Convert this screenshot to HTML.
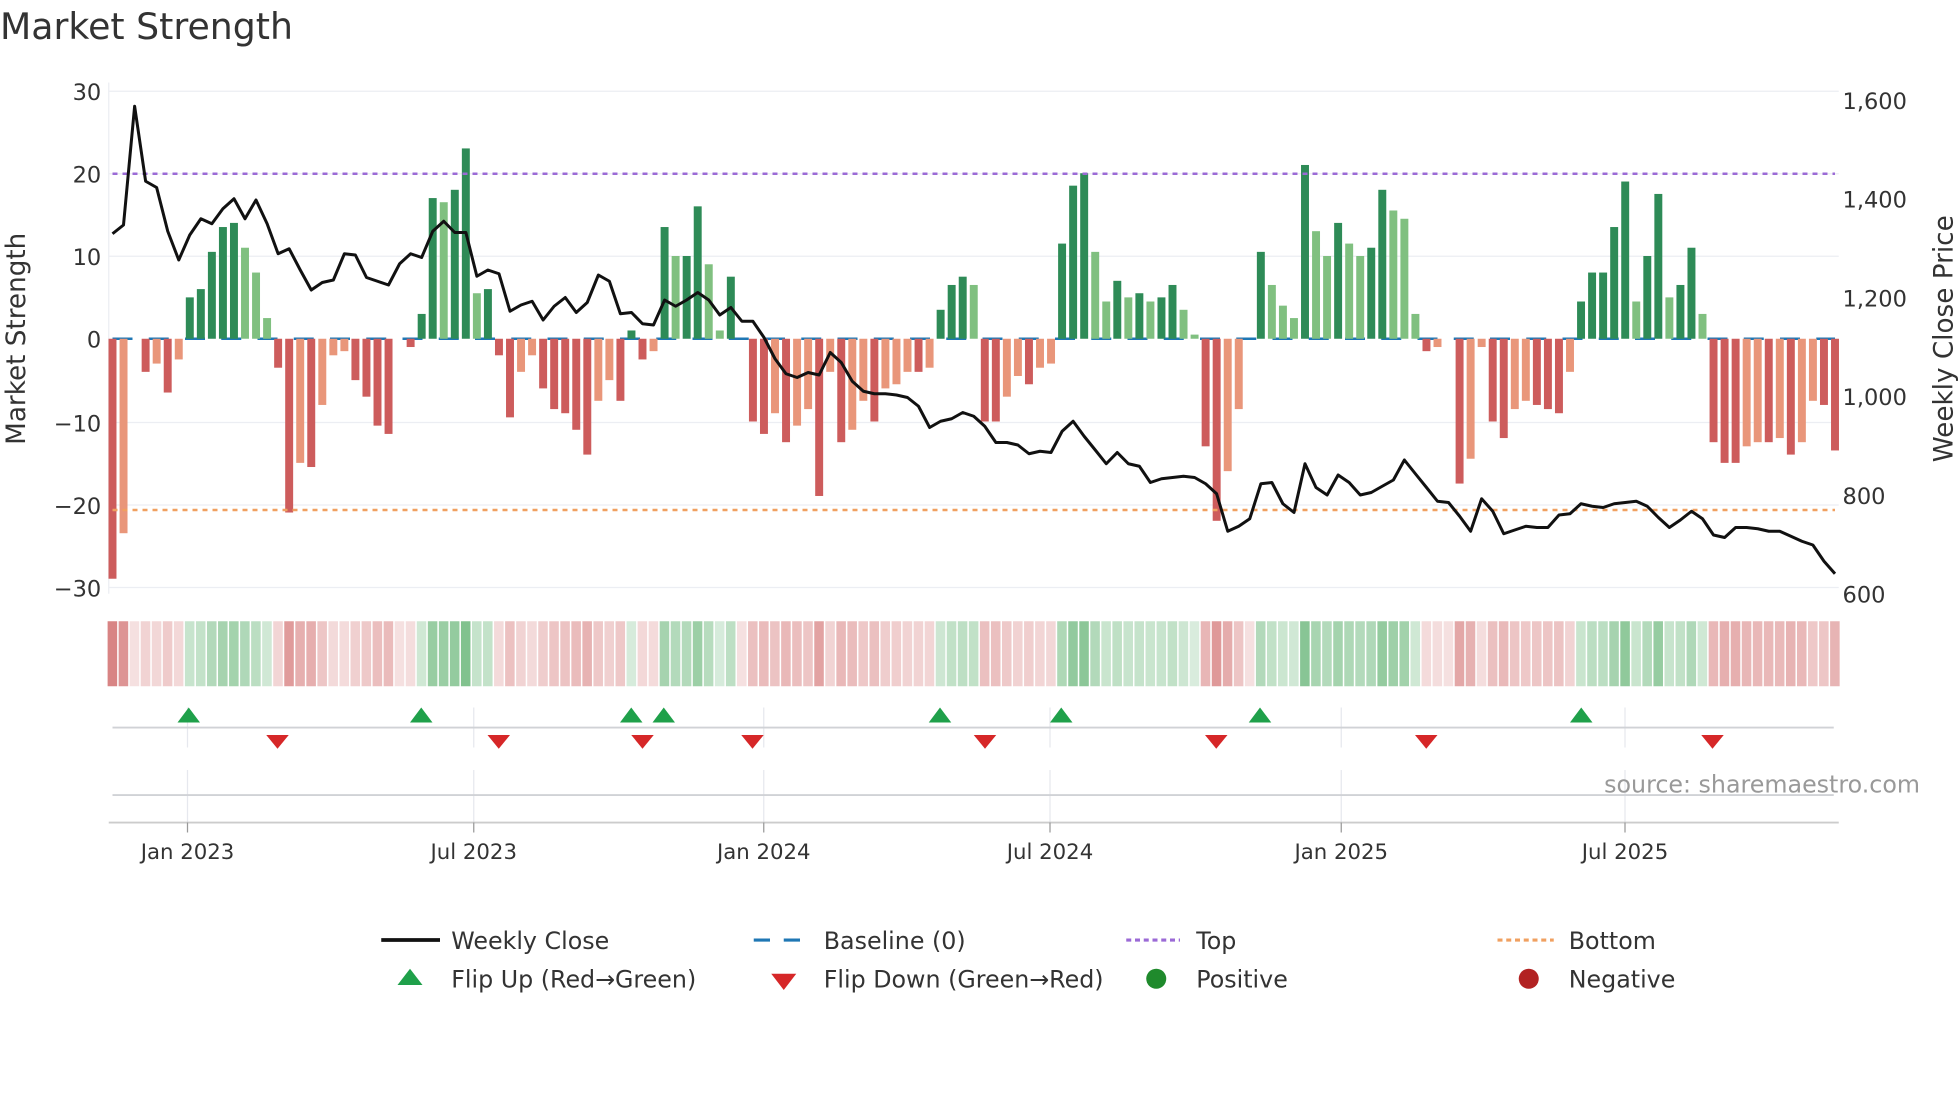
<!DOCTYPE html>
<html><head><meta charset="utf-8"><style>
html,body{margin:0;padding:0;background:#fff;width:1960px;height:1102px;overflow:hidden}
svg{display:block;font-family:"DejaVu Sans","Liberation Sans",sans-serif}
</style></head><body>
<svg id="c" width="1960" height="1102" viewBox="0 0 1568 881.6" xmlns="http://www.w3.org/2000/svg">
<text x="0" y="31" font-size="29" fill="#333">Market Strength</text>
<g id="grid" stroke="#eceef3" stroke-width="1">
<line x1="87" x2="1471" y1="73" y2="73"/><line x1="87" x2="1471" y1="139" y2="139"/><line x1="87" x2="1471" y1="205" y2="205"/><line x1="87" x2="1471" y1="338" y2="338"/><line x1="87" x2="1471" y1="404" y2="404"/><line x1="87" x2="1471" y1="470" y2="470"/>
<line x1="87" x2="87" y1="66" y2="475"/>
</g>
<g font-size="18" fill="#333" text-anchor="end">
<text x="81" y="80">30</text><text x="81" y="146">20</text><text x="81" y="212">10</text><text x="81" y="278">0</text><text x="81" y="345">−10</text><text x="81" y="411">−20</text><text x="81" y="477">−30</text>
</g>
<g font-size="18" fill="#333">
<text x="1474" y="87">1,600</text><text x="1474" y="166">1,400</text><text x="1474" y="245">1,200</text><text x="1474" y="324">1,000</text><text x="1474" y="403">800</text><text x="1474" y="482">600</text>
</g>
<text transform="translate(20,271) rotate(-90)" font-size="21" fill="#333" text-anchor="middle">Market Strength</text>
<text transform="translate(1562,271) rotate(-90)" font-size="21" fill="#333" text-anchor="middle">Weekly Close Price</text>
<line x1="90" x2="1468" y1="271" y2="271" stroke="#1f77b4" stroke-width="2" stroke-dasharray="16,13"/>
<g id="bars"></g>
<line x1="90" x2="1468" y1="139" y2="139" stroke="#9b6ad6" stroke-width="2" stroke-dasharray="4,4"/>
<line x1="90" x2="1468" y1="408" y2="408" stroke="#f0a060" stroke-width="2" stroke-dasharray="4,4"/>
<polyline id="close" fill="none" stroke="#111" stroke-width="2.4" stroke-linejoin="round"/>
<g id="strip"></g>
<g stroke="#e6e8ee" stroke-width="1">
<line x1="150" x2="150" y1="566" y2="598"/><line x1="379" x2="379" y1="566" y2="598"/><line x1="611" x2="611" y1="566" y2="598"/><line x1="840" x2="840" y1="566" y2="598"/><line x1="1073" x2="1073" y1="566" y2="598"/><line x1="1300" x2="1300" y1="566" y2="598"/>
<line x1="150" x2="150" y1="616" y2="658"/><line x1="379" x2="379" y1="616" y2="658"/><line x1="611" x2="611" y1="616" y2="658"/><line x1="840" x2="840" y1="616" y2="658"/><line x1="1073" x2="1073" y1="616" y2="658"/><line x1="1300" x2="1300" y1="616" y2="658"/>
</g>
<line x1="90" x2="1467" y1="582" y2="582" stroke="#d0d2d6" stroke-width="1.5"/>
<line x1="90" x2="1467" y1="636" y2="636" stroke="#d0d2d6" stroke-width="1.5"/>
<line x1="87" x2="1471" y1="658" y2="658" stroke="#ccc" stroke-width="1.5"/>
<g stroke="#999" stroke-width="1">
<line x1="150" x2="150" y1="658" y2="666"/><line x1="379" x2="379" y1="658" y2="666"/><line x1="611" x2="611" y1="658" y2="666"/><line x1="840" x2="840" y1="658" y2="666"/><line x1="1073" x2="1073" y1="658" y2="666"/><line x1="1300" x2="1300" y1="658" y2="666"/>
</g>
<g id="flips"></g>
<text x="1536" y="634" font-size="19" fill="#999" text-anchor="end">source: sharemaestro.com</text>
<g font-size="17" fill="#333" text-anchor="middle">
<text x="150" y="687">Jan 2023</text><text x="379" y="687">Jul 2023</text><text x="611" y="687">Jan 2024</text><text x="840" y="687">Jul 2024</text><text x="1073" y="687">Jan 2025</text><text x="1300" y="687">Jul 2025</text>
</g>
<g font-size="19" fill="#333">
<line x1="305" x2="352" y1="752" y2="752" stroke="#111" stroke-width="3"/>
<text x="361" y="759">Weekly Close</text>
<line x1="603" x2="646" y1="752" y2="752" stroke="#1f77b4" stroke-width="2.5" stroke-dasharray="13,11"/>
<text x="659" y="759">Baseline (0)</text>
<line x1="901" x2="944" y1="752" y2="752" stroke="#9b6ad6" stroke-width="2.5" stroke-dasharray="4,3"/>
<text x="957" y="759">Top</text>
<line x1="1198" x2="1243" y1="752" y2="752" stroke="#f0a060" stroke-width="2.5" stroke-dasharray="4,3"/>
<text x="1255" y="759">Bottom</text>
<polygon points="328,775 318,788 338,788" fill="#1fa04a"/>
<text x="361" y="790">Flip Up (Red→Green)</text>
<polygon points="617,779 637,779 627,792" fill="#d62728"/>
<text x="659" y="790">Flip Down (Green→Red)</text>
<circle cx="925" cy="783" r="8" fill="#1f8a2c"/>
<text x="957" y="790">Positive</text>
<circle cx="1223" cy="783" r="8" fill="#b22222"/>
<text x="1255" y="790">Negative</text>
</g>
</svg>
<script>
var V=[-29,-23.5,0,-4,-3,-6.5,-2.5,5,6,10.5,13.5,14,11,8,2.5,-3.5,-21,-15,-15.5,-8,-2,-1.5,-5,-7,-10.5,-11.5,0,-1,3,17,16.5,18,23,5.5,6,-2,-9.5,-4,-2,-6,-8.5,-9,-11,-14,-7.5,-5,-7.5,1,-2.5,-1.5,13.5,10,10,16,9,1,7.5,0,-10,-11.5,-9,-12.5,-10.5,-8.5,-19,-4,-12.5,-11,-7.5,-10,-6,-5.5,-4,-4,-3.5,3.5,6.5,7.5,6.5,-10,-10,-7,-4.5,-5.5,-3.5,-3,11.5,18.5,20,10.5,4.5,7,5,5.5,4.5,5,6.5,3.5,0.5,-13,-22,-16,-8.5,0,10.5,6.5,4,2.5,21,13,10,14,11.5,10,11,18,15.5,14.5,3,-1.5,-1,0,-17.5,-14.5,-1,-10,-12,-8.5,-7.5,-8,-8.5,-9,-4,4.5,8,8,13.5,19,4.5,10,17.5,5,6.5,11,3,-12.5,-15,-15,-13,-12.5,-12.5,-12,-14,-12.5,-7.5,-8,-13.5];
var C=[187,180,85,145,150,185,208,188,175,179,167,159,175,160,179,203,199,216,232,226,224,203,204,222,225,228,211,203,206,185,177,186,186,221,216,219,249,244,241,256,245,238,250,242,220,225,251,250,259,260,240,245,240,234,240,252,246,257,257,270,287,299,302,298,300,282,290,305,313,315,315,316,318,325,342,337,335,330,333,341,354,354,356,363,361,362,345,337,349,360,371,362,371,373,386,383,382,381,382,387,395,425,421,415,387,386,403,410,371,390,396,380,386,396,394,389,384,368,379,390,401,402,413,425,399,409,427,424,421,422,422,412,411,403,405,406,403,402,401,405,414,422,416,409,415,428,430,422,422,423,425,425,429,433,436,449,459];
var NS="http://www.w3.org/2000/svg";
function el(t,a,p){var e=document.createElementNS(NS,t);for(var k in a)e.setAttribute(k,a[k]);p.appendChild(e);return e;}
var n=V.length,x0=90,x1=1468,st=(x1-x0)/(n-1),bw=st*0.72;
var bars=document.getElementById('bars'),strip=document.getElementById('strip');
for(var i=0;i<n;i++){var v=V[i],x=x0+i*st,p=i?V[i-1]:0,y0=271,h=v*6.62,col;
 if(v>0)col=(v>=p)?'#2e8b57':'#80c080';else col=(v<=p)?'#cd5c5c':'#e9967a';
 if(v!=0)el('rect',{x:x-bw/2,y:v>0?y0-h:y0,width:bw,height:Math.abs(h),fill:col},bars);
 var a=Math.min(1,0.25+Math.abs(v)/30*0.8);
 var sc=v>0?'rgba(60,160,80,'+(a*0.75)+')':'rgba(200,80,80,'+(a*0.7)+')';
 el('rect',{x:x-st/2+0.5,y:497,width:st-1.2,height:52,fill:sc},strip);
}
var pts=[];for(var j=0;j<C.length;j++)pts.push((x0+j*(x1-x0)/(C.length-1)).toFixed(1)+','+C[j]);
document.getElementById('close').setAttribute('points',pts.join(' '));
var fl=document.getElementById('flips');
[151,337,505,531,752,849,1008,1265].forEach(function(x){el('polygon',{points:x+',566 '+(x-9)+',578 '+(x+9)+',578',fill:'#1fa04a'},fl);});
[222,399,514,602,788,973,1141,1370].forEach(function(x){el('polygon',{points:(x-9)+',588 '+(x+9)+',588 '+x+',599',fill:'#d62728'},fl);});
</script>
</body></html>
